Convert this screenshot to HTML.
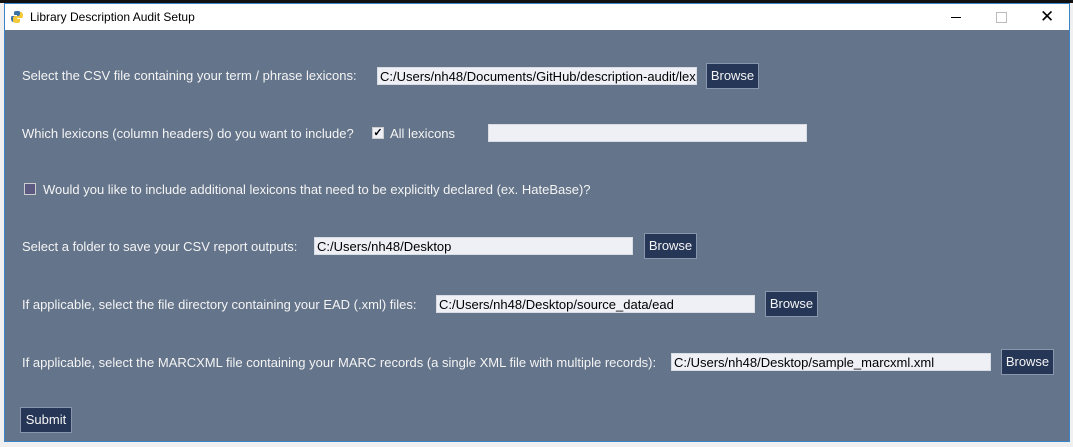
<!DOCTYPE html>
<html><head><style>
body{margin:0;width:1073px;height:447px;background:#f0f0f0;position:relative;overflow:hidden;font-family:"Liberation Sans",Arial,sans-serif}
#top{position:absolute;left:0;top:0;width:1073px;height:3px;background:#111}
#win{position:absolute;left:4px;top:3px;width:1064px;height:437px;border:1px solid #3c84c8;background:#64748a}
#title{position:absolute;left:0;top:0;width:100%;height:26px;background:#fff;font-size:12px;color:#000}
.t{position:absolute;color:#f4f4f4;font-size:13px;white-space:nowrap}
.in{position:absolute;height:18px;background:#eef0f6;border:1px solid #d8dce4;box-sizing:border-box;font-size:13px;color:#000;line-height:17px;padding-left:2px;white-space:nowrap;overflow:hidden}
.b{position:absolute;height:26px;width:53px;background:#263656;border:1px solid #8a96ac;box-sizing:border-box;color:#f4f4f4;font-size:13px;line-height:24px;text-align:center}
.cb{position:absolute;width:12px;height:12px;border:1px solid #ccc;box-sizing:border-box}
</style></head><body>
<div id="top"></div>
<div id="win">
<div id="title">
<svg style="position:absolute;left:5px;top:6px" width="14" height="14" viewBox="0 0 14 14"><path d="M7 1C4 1 4 2 4 3v2h3v1H2C1 6 1 8 1 9s1 3 2 3h1V10c0-1 1-2 2-2h3c1 0 2-1 2-2V3c0-1-1-2-4-2z" fill="#3d74a8"/><path d="M7 13c3 0 3-1 3-2V9H7V8h5c1 0 1-2 1-3s-1-3-2-3h-1v2c0 1-1 2-2 2H5c-1 0-2 1-2 2v3c0 1 1 2 4 2z" fill="#f5c93a"/></svg>
<span style="position:absolute;left:25px;top:6px">Library Description Audit Setup</span>
<div style="position:absolute;left:946px;top:13px;width:10px;height:1px;background:#000"></div>
<div style="position:absolute;left:991px;top:8px;width:9px;height:9px;border:1px solid #bbb"></div>
<span style="position:absolute;left:1035px;top:3px;font-size:17px;font-weight:300">✕</span>
</div>
</div>
<div class="t" style="left:22px;top:68px">Select the CSV file containing your term / phrase lexicons:</div>
<div class="in" style="left:377px;top:67px;width:320px">C:/Users/nh48/Documents/GitHub/description-audit/lex</div>
<div class="b" style="left:706px;top:63px">Browse</div>

<div class="t" style="left:22px;top:126px">Which lexicons (column headers) do you want to include?</div>
<div class="cb" style="left:372px;top:127px;background:#eef0f6;font-size:11px;line-height:10px;color:#000;text-align:center;font-weight:bold">✓</div>
<div class="t" style="left:390px;top:126px">All lexicons</div>
<div class="in" style="left:488px;top:124px;width:319px"></div>

<div class="cb" style="left:24px;top:183px;background:#5c5a80"></div>
<div class="t" style="left:43px;top:182px">Would you like to include additional lexicons that need to be explicitly declared (ex. HateBase)?</div>

<div class="t" style="left:22px;top:239px">Select a folder to save your CSV report outputs:</div>
<div class="in" style="left:314px;top:237px;width:319px">C:/Users/nh48/Desktop</div>
<div class="b" style="left:644px;top:233px">Browse</div>

<div class="t" style="left:22px;top:297px">If applicable, select the file directory containing your EAD (.xml) files:</div>
<div class="in" style="left:436px;top:295px;width:319px">C:/Users/nh48/Desktop/source_data/ead</div>
<div class="b" style="left:765px;top:291px">Browse</div>

<div class="t" style="left:22px;top:355px">If applicable, select the MARCXML file containing your MARC records (a single XML file with multiple records):</div>
<div class="in" style="left:671px;top:353px;width:320px">C:/Users/nh48/Desktop/sample_marcxml.xml</div>
<div class="b" style="left:1001px;top:349px">Browse</div>

<div class="b" style="left:20px;top:407px;width:52px">Submit</div>
</body></html>
